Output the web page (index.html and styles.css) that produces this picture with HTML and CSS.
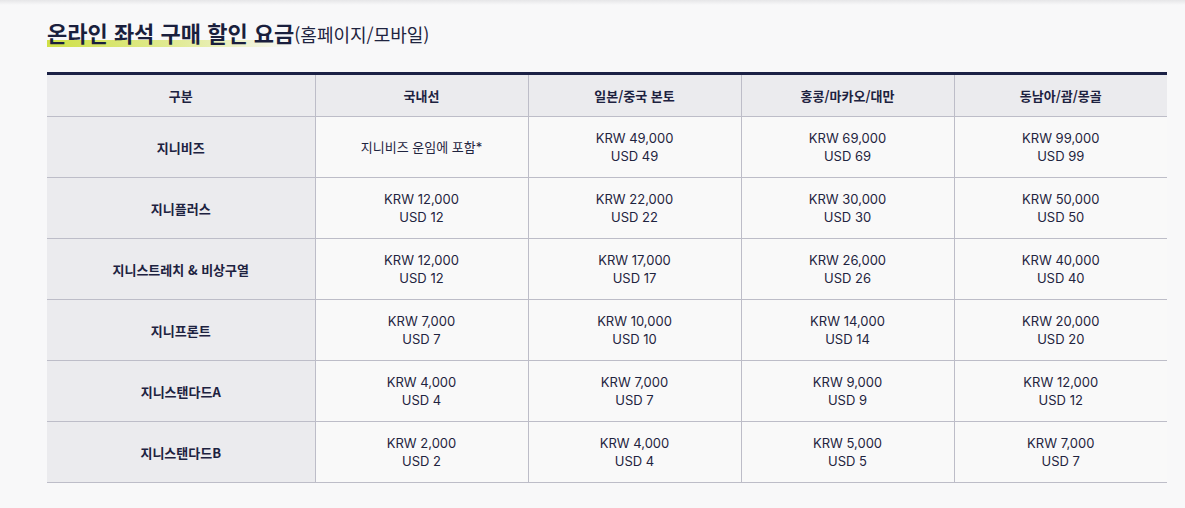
FILE: index.html
```html
<!DOCTYPE html>
<html lang="ko">
<head>
<meta charset="utf-8">
<title>온라인 좌석 구매 할인 요금</title>
<link rel="stylesheet" href="styles.css">
</head>
<body>
<div class="topshade"></div>
<main class="wrap">
  <h2 class="title"><span class="mark">온라인 좌석 구매 할인 요금</span><span class="sub">(홈페이지/모바일)</span></h2>
  <table class="fare">
    <colgroup>
      <col class="c-first"><col class="c"><col class="c"><col class="c"><col class="c">
    </colgroup>
    <thead>
      <tr><th>구분</th><th>국내선</th><th>일본/중국 본토</th><th>홍콩/마카오/대만</th><th>동남아/괌/몽골</th></tr>
    </thead>
    <tbody>
      <tr><th>지니비즈</th><td>지니비즈 운임에 포함*</td><td>KRW 49,000<br>USD 49</td><td>KRW 69,000<br>USD 69</td><td>KRW 99,000<br>USD 99</td></tr>
      <tr><th>지니플러스</th><td>KRW 12,000<br>USD 12</td><td>KRW 22,000<br>USD 22</td><td>KRW 30,000<br>USD 30</td><td>KRW 50,000<br>USD 50</td></tr>
      <tr><th>지니스트레치 &amp; 비상구열</th><td>KRW 12,000<br>USD 12</td><td>KRW 17,000<br>USD 17</td><td>KRW 26,000<br>USD 26</td><td>KRW 40,000<br>USD 40</td></tr>
      <tr><th>지니프론트</th><td>KRW 7,000<br>USD 7</td><td>KRW 10,000<br>USD 10</td><td>KRW 14,000<br>USD 14</td><td>KRW 20,000<br>USD 20</td></tr>
      <tr><th>지니스탠다드A</th><td>KRW 4,000<br>USD 4</td><td>KRW 7,000<br>USD 7</td><td>KRW 9,000<br>USD 9</td><td>KRW 12,000<br>USD 12</td></tr>
      <tr><th>지니스탠다드B</th><td>KRW 2,000<br>USD 2</td><td>KRW 4,000<br>USD 4</td><td>KRW 5,000<br>USD 5</td><td>KRW 7,000<br>USD 7</td></tr>
    </tbody>
  </table>
</main>
</body>
</html>
```

FILE: styles.css
```css
html, body {
  margin: 0;
  padding: 0;
  background: #f8f8f9;
}
body {
  font-family: "Inter", "Noto Sans CJK KR", sans-serif;
  color: #1d2240;
  position: relative;
}
.topshade {
  height: 5px;
  background: linear-gradient(to bottom, #e6e6e8, #f8f8f9);
}
.wrap {
  padding: 11px 47px 0 47px;
}
.title {
  margin: 0 0 22px 0;
  font-size: 22px;
  line-height: 32px;
  font-weight: 700;
  color: #1a1f3d;
  font-family: "Noto Sans CJK KR", sans-serif;
  letter-spacing: 0;
}
.mark {
  background-image: linear-gradient(to right, #cfe047 0%, #e2eb9a 55%, rgba(248,248,249,0) 100%);
  background-repeat: no-repeat;
  background-size: 100% 7px;
  background-position: 0 24px;
}
.sub {
  font-size: 18px;
  font-weight: 400;
  color: #1f2440;
  letter-spacing: 0;
}
.fare {
  width: 1120px;
  border-collapse: collapse;
  table-layout: fixed;
  border-top: 3px solid #1b2145;
}
.c-first { width: 268px; }
.c { width: 213px; }
.fare th, .fare td {
  border: 1px solid #bdbdc8;
  text-align: center;
  vertical-align: middle;
  padding: 0;
}
.fare tr > :first-child { border-left: none; }
.fare tr > :last-child { border-right: none; }
.fare thead th {
  height: 41px;
  background: #ebebee;
  font-family: "Noto Sans CJK KR", sans-serif;
  font-size: 13px;
  font-weight: 700;
  color: #1d2240;
  border-top: none;
}
.fare tbody th {
  background: #ebebee;
  font-family: "Noto Sans CJK KR", sans-serif;
  font-size: 13px;
  font-weight: 700;
  color: #1d2240;
  height: 60px;
}
.fare tbody td {
  background: #f9f9f9;
  font-size: 13px;
  line-height: 18px;
  color: #1f2440;
  height: 60px;
}
```
